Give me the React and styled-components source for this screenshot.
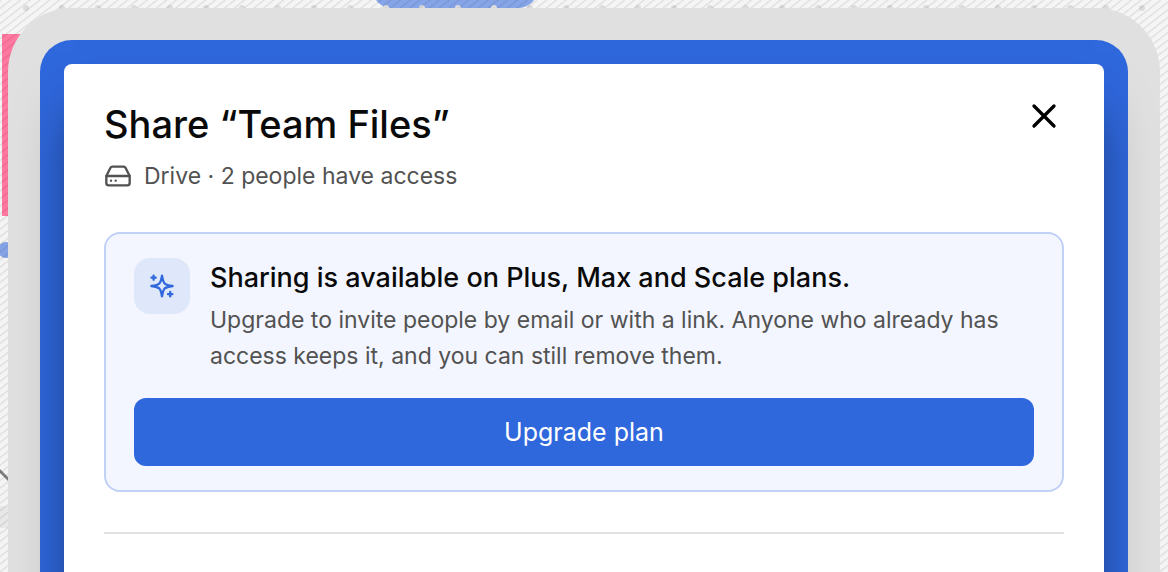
import { createGlobalStyle, styled } from "styled-components";
import { HardDrive, X } from "lucide-react";

const GlobalStyle = createGlobalStyle`
  * {
    box-sizing: border-box;
  }

  body {
    margin: 0;
    font-family: Inter, "Liberation Sans", sans-serif;
    color: #0a0a0a;
  }

  h1, h2, p {
    margin: 0;
  }
`;

const Page = styled.div`
  position: relative;
  height: 100vh;
  overflow: hidden;
  padding: 8px;
  background: #f5f5f5;
`;

const Backdrop = styled.svg`
  position: absolute;
  inset: 0;
  width: 100%;
  height: 100%;
`;

const Frame = styled.div`
  position: relative;
  display: flex;
  min-height: 125vh;
  padding: 32px;
  border-radius: 64px;
  background: #e0e0e0;
`;

const Screen = styled.div`
  flex: 1;
  display: flex;
  padding: 24px;
  border-radius: 32px;
  background: #2f67dc;
`;

const Dialog = styled.section`
  flex: 1;
  padding: 32px 40px;
  border-radius: 8px;
  background: #fff;
  box-shadow: 0 40px 50px -10px rgba(0, 0, 0, 0.5);
`;

const Header = styled.header`
  display: flex;
  align-items: flex-start;
  justify-content: space-between;
`;

const Heading = styled.div`
  padding-top: 8px;
`;

const Title = styled.h1`
  font-size: 38px;
  line-height: 40px;
  font-weight: 500;
`;

const Meta = styled.p`
  display: flex;
  align-items: center;
  gap: 12px;
  margin-top: 16px;
  font-size: 23px;
  line-height: 32px;
  color: #525252;
`;

const CloseButton = styled.button`
  display: flex;
  padding: 0;
  border: 0;
  background: none;
  color: #000;
  cursor: pointer;
`;

const Notice = styled.div`
  margin-top: 40px;
  padding: 24px 28px;
  border: 2px solid #c0d1f5;
  border-radius: 16px;
  background: #f3f6fe;
`;

const NoticeBody = styled.div`
  display: flex;
  align-items: flex-start;
  gap: 20px;
`;

const IconTile = styled.div`
  flex: none;
  display: grid;
  place-items: center;
  width: 56px;
  height: 56px;
  border-radius: 16px;
  background: #dfe7fa;
  color: #2f67dc;
`;

const NoticeTitle = styled.h2`
  font-size: 27px;
  line-height: 40px;
  font-weight: 500;
`;

const NoticeText = styled.p`
  margin-top: 4px;
  font-size: 23px;
  line-height: 36px;
  color: #525252;
`;

const UpgradeButton = styled.button`
  width: 100%;
  height: 68px;
  margin-top: 24px;
  border: 0;
  border-radius: 12px;
  background: #2f67dc;
  color: #fff;
  font-family: inherit;
  font-size: 25px;
  cursor: pointer;
`;

const Divider = styled.hr`
  height: 2px;
  margin: 40px 0 0;
  border: 0;
  background: #e2e2e2;
`;

const Decoration = () => (
  <Backdrop aria-hidden="true">
    <defs>
      <pattern id="hatch" width="6" height="6" patternUnits="userSpaceOnUse" patternTransform="rotate(-38)">
        <rect width="6" height="1.2" fill="#000" fillOpacity="0.1" />
      </pattern>
      <pattern id="dots" x="8" width="36" height="36" patternUnits="userSpaceOnUse">
        <circle cx="18" cy="8" r="3" fill="#dcdcdc" />
      </pattern>
    </defs>
    <rect x="2" y="34" width="60" height="182" fill="#ff789f" />
    <circle cx="6" cy="250" r="8" fill="#86a5e8" />
    <rect x="372" y="-40" width="166" height="48" rx="20" fill="#86a5e8" />
    <rect width="100%" height="12" fill="url(#dots)" />
    <rect y="506" width="8" height="22" fill="#e9e9e9" />
    <path d="M-2 469 L12 483" stroke="#808080" strokeWidth="3" />
    <rect width="100%" height="100%" fill="url(#hatch)" />
  </Backdrop>
);

const SparkleIcon = () => (
  <svg
    width="28"
    height="28"
    viewBox="0 0 28 28"
    fill="none"
    stroke="currentColor"
    strokeWidth="2.3"
    strokeLinecap="round"
    strokeLinejoin="round"
    aria-hidden="true"
  >
    <path d="M14 3.6 C14.8 8.3 15.6 10.5 16.6 11.4 C17.5 12.4 19.7 13.2 24.6 14 C19.7 14.8 17.5 15.6 16.6 16.6 C15.6 17.5 14.8 19.7 14 24.4 C13.2 19.7 12.4 17.5 11.4 16.6 C10.5 15.6 8.3 14.8 3.4 14 C8.3 13.2 10.5 12.4 11.4 11.4 C12.4 10.5 13.2 8.3 14 3.6 Z" />
    <path d="M5.6 3.6 V7.8 M3.5 5.7 H7.7" />
    <path d="M22.2 20 V24.4 M20 22.2 H24.4" />
  </svg>
);

const App = () => {
  return (
    <Page>
      <GlobalStyle />
      <Decoration />
      <Frame>
        <Screen>
          <Dialog role="dialog" aria-labelledby="share-title">
            <Header>
              <Heading>
                <Title id="share-title">Share “Team Files”</Title>
                <Meta>
                  <HardDrive size={28} />
                  Drive · 2 people have access
                </Meta>
              </Heading>
              <CloseButton aria-label="Close">
                <X size={40} />
              </CloseButton>
            </Header>
            <Notice>
              <NoticeBody>
                <IconTile>
                  <SparkleIcon />
                </IconTile>
                <div>
                  <NoticeTitle>Sharing is available on Plus, Max and Scale plans.</NoticeTitle>
                  <NoticeText>
                    Upgrade to invite people by email or with a link. Anyone who already has access keeps it, and you
                    can still remove them.
                  </NoticeText>
                </div>
              </NoticeBody>
              <UpgradeButton>Upgrade plan</UpgradeButton>
            </Notice>
            <Divider />
          </Dialog>
        </Screen>
      </Frame>
    </Page>
  );
};

export default App;
